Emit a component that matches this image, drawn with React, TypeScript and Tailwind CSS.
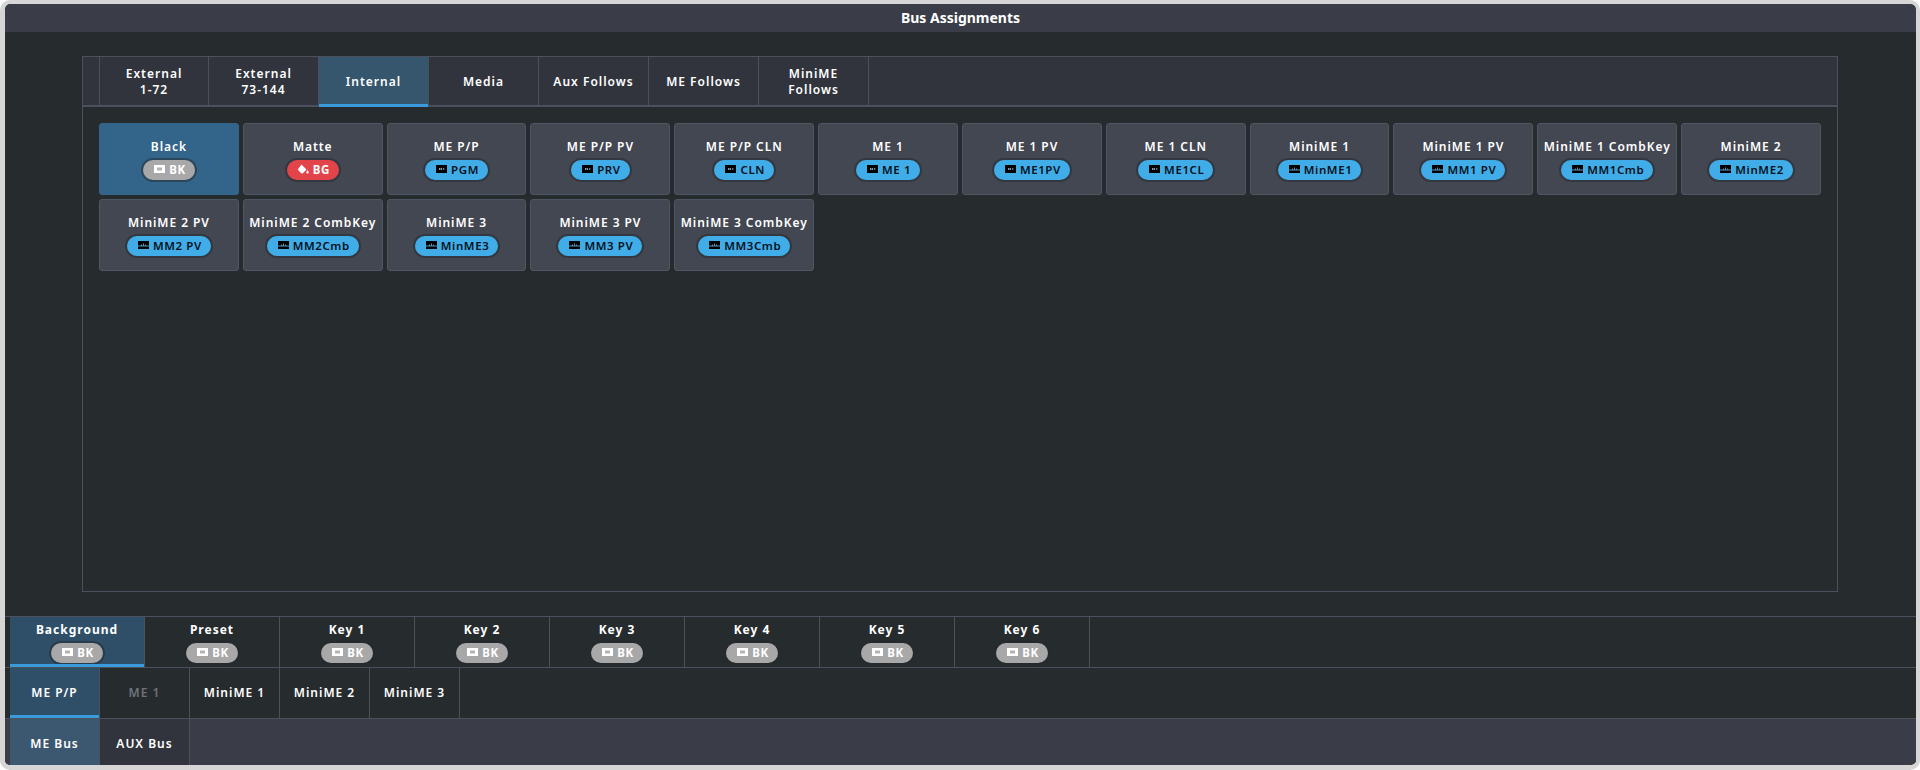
const font = "font-['Noto_Sans',sans-serif]";

type Kind = "black" | "matte" | "me" | "mini";

const sources: { name: string; tag: string; kind: Kind }[] = [
  { name: "Black", tag: "BK", kind: "black" },
  { name: "Matte", tag: "BG", kind: "matte" },
  { name: "ME P/P", tag: "PGM", kind: "me" },
  { name: "ME P/P PV", tag: "PRV", kind: "me" },
  { name: "ME P/P CLN", tag: "CLN", kind: "me" },
  { name: "ME 1", tag: "ME 1", kind: "me" },
  { name: "ME 1 PV", tag: "ME1PV", kind: "me" },
  { name: "ME 1 CLN", tag: "ME1CL", kind: "me" },
  { name: "MiniME 1", tag: "MinME1", kind: "mini" },
  { name: "MiniME 1 PV", tag: "MM1 PV", kind: "mini" },
  { name: "MiniME 1 CombKey", tag: "MM1Cmb", kind: "mini" },
  { name: "MiniME 2", tag: "MinME2", kind: "mini" },
  { name: "MiniME 2 PV", tag: "MM2 PV", kind: "mini" },
  { name: "MiniME 2 CombKey", tag: "MM2Cmb", kind: "mini" },
  { name: "MiniME 3", tag: "MinME3", kind: "mini" },
  { name: "MiniME 3 PV", tag: "MM3 PV", kind: "mini" },
  { name: "MiniME 3 CombKey", tag: "MM3Cmb", kind: "mini" },
];

function BlackIcon() {
  return (
    <svg width="11" height="8" viewBox="0 0 11 8" className="mb-[2px] shrink-0">
      <rect width="11" height="8" fill="#fff" />
      <rect x="3" y="2.500" width="5" height="3" fill="#b4b4b4" />
    </svg>
  );
}

function MeIcon() {
  return (
    <svg width="11" height="8" viewBox="0 0 11 8" className="mb-[2px] shrink-0">
      <rect width="11" height="8" fill="#000" />
      <path d="M3 3h1l1 1V3h1v2H5L4 4v1H3zM7 3h1.500v.6H7.600v.8h.9V5H7z" fill="#7f9db3" />
    </svg>
  );
}

function MiniIcon() {
  return (
    <svg width="11" height="8" viewBox="0 0 11 8" className="mb-[2px] shrink-0">
      <path d="M0 0h11v8H0z" fill="#000" />
      <path d="M0 4.500h3V3.500h1v1h1V2.500h1v2h1V3.500h1v1h3v1H0z" fill="#5c93b8" />
    </svg>
  );
}

function BucketIcon() {
  return (
    <svg width="11" height="10" viewBox="0 0 11 10" className="mb-[1px] shrink-0">
      <path d="M3.500 0.500 L8.500 5.500 L4.800 9.200 Q4 10 3.200 9.200 L0.300 6.300 Q-0.300 5.500 0.300 4.800 Z" fill="#fff" />
      <path d="M9.500 6 Q11 8 10.500 9 Q9.500 10.200 8.500 9 Q8 8 9.500 6Z" fill="#fff" />
    </svg>
  );
}

function Pill({ tag, kind }: { tag: string; kind: Kind }) {
  const tone =
    kind === "black"
      ? "bg-[#a8a8a8] text-white font-bold"
      : kind === "matte"
        ? "bg-[#e2444a] text-white font-bold"
        : "bg-[#41ade8] text-[#04101a] font-semibold";
  return (
    <span className={`inline-flex h-[20px] items-center gap-[4px] rounded-full pl-[11px] pr-[9px] text-[11.500px] leading-none tracking-[0.600px] shadow-[0_0_0_2px_rgba(36,41,46,0.5)] ${tone}`}>
      {kind === "black" && <BlackIcon />}
      {kind === "matte" && <BucketIcon />}
      {kind === "me" && <MeIcon />}
      {kind === "mini" && <MiniIcon />}
      {tag}
    </span>
  );
}

function Tab({
  className,
  active,
  underlineClass = "bottom-0",
  children,
}: {
  className: string;
  active?: boolean;
  underlineClass?: string;
  children: React.ReactNode;
}) {
  return (
    <div className={`relative flex shrink-0 flex-col items-center justify-center border-r border-[#4a505c] text-center text-[12px] font-semibold leading-[16px] tracking-[1px] ${className}`}>
      {children}
      {active && <div className={`absolute inset-x-0 h-[3px] bg-[#3a9bdc] ${underlineClass}`} />}
    </div>
  );
}

export default function App() {
  return (
    <div className={`${font} h-[770px] w-[1920px] overflow-hidden bg-white`}>
      <div className="flex h-full flex-col overflow-hidden rounded-[10px] border-[4px] border-b-[5px] border-l-[5px] border-[#d6d6d6] bg-[#262b2e]">
        <div className="flex h-[28px] shrink-0 items-center justify-center bg-[#3a3d47] pb-[2px] text-[14px] font-bold text-white">
          Bus Assignments
        </div>

        <div className="flex min-h-0 flex-1 flex-col pb-[24px] pl-[77px] pr-[78px] pt-[24px]">
          <div className="flex min-h-0 flex-1 flex-col border border-[#4a505c]">
            <div className="flex h-[50px] shrink-0 border-b-2 border-[#4a505c] bg-[#31343d] text-white">
              <div className="w-[17px] shrink-0 border-r border-[#4a505c]" />
              <Tab className="w-[109px] pt-[2px]">External<br />1-72</Tab>
              <Tab className="w-[110px] pt-[2px]">External<br />73-144</Tab>
              <Tab className="w-[110px] bg-[#36566e] pt-[2px]" active underlineClass="-bottom-[2px]">Internal</Tab>
              <Tab className="w-[110px] pt-[2px]">Media</Tab>
              <Tab className="w-[110px] pt-[2px]">Aux Follows</Tab>
              <Tab className="w-[110px] pt-[2px]">ME Follows</Tab>
              <Tab className="w-[110px] pt-[2px]">MiniME<br />Follows</Tab>
            </div>
            <div className="grid grid-cols-12 content-start gap-[4px] p-[16px]">
              {sources.map((s) => (
                <div
                  key={s.name}
                  className={`flex h-[72px] flex-col items-center justify-center gap-[5px] rounded-[3px] border ${
                    s.kind === "black" ? "border-[#33658a] bg-[#33658a]" : "border-[#4e5563] bg-[#434752]"
                  }`}
                >
                  <span className="text-[12px] font-semibold leading-[16px] tracking-[0.950px] text-white">{s.name}</span>
                  <Pill tag={s.tag} kind={s.kind} />
                </div>
              ))}
            </div>
          </div>
        </div>

        <div className="flex h-[51px] shrink-0 border-t border-[#4a505c] pl-[5px] text-white">
          {["Background", "Preset", "Key 1", "Key 2", "Key 3", "Key 4", "Key 5", "Key 6"].map((k, i) => (
            <Tab key={k} className={`w-[135px] ${i === 0 ? "bg-[#2f4f68]" : ""}`} active={i === 0}>
              <span className="font-bold">{k}</span>
              <span className="mt-[5px]"><Pill tag="BK" kind="black" /></span>
            </Tab>
          ))}
        </div>

        <div className="flex h-[51px] shrink-0 border-t border-[#4a505c] pl-[5px] text-white">
          <Tab className="w-[90px] bg-[#2f4f68]" active>ME P/P</Tab>
          <Tab className="w-[90px] text-[#6f7378]">ME 1</Tab>
          <Tab className="w-[90px]">MiniME 1</Tab>
          <Tab className="w-[90px]">MiniME 2</Tab>
          <Tab className="w-[90px]">MiniME 3</Tab>
        </div>

        <div className="flex h-[47px] shrink-0 border-t border-[#4a505c] bg-[#3a3d47] pl-[5px] text-white">
          <Tab className="w-[90px] bg-[#3b5870] pt-[4px]">ME Bus</Tab>
          <Tab className="w-[90px] bg-[#31343d] pt-[4px]">AUX Bus</Tab>
        </div>
      </div>
    </div>
  );
}
